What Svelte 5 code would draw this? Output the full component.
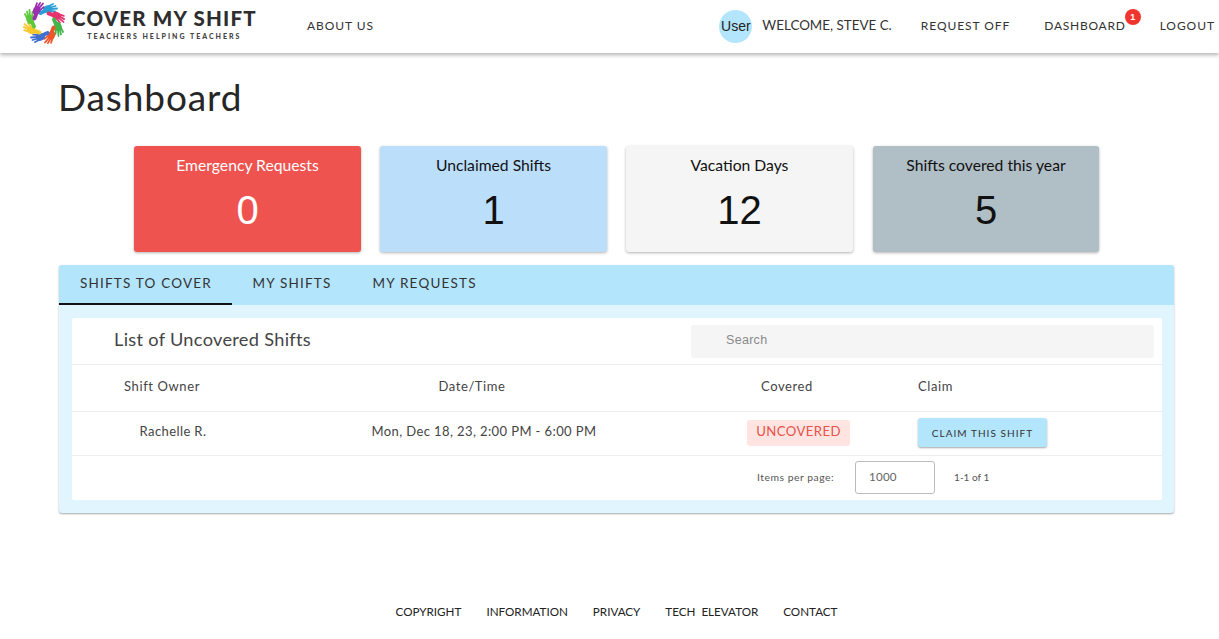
<script lang="ts">
  const stats = [
    { label: "Emergency Requests", value: 0, tone: "red" },
    { label: "Unclaimed Shifts", value: 1, tone: "blue" },
    { label: "Vacation Days", value: 12, tone: "light" },
    { label: "Shifts covered this year", value: 5, tone: "slate" }
  ];
  const tabs = ["Shifts to cover", "My shifts", "My requests"];
  const footerLinks = ["Copyright", "Information", "Privacy", "Tech  Elevator", "Contact"];

  // hands of the logo, clockwise from the top
  const hands = ["#2a9fd6", "#e5336f", "#43b649", "#f0562b", "#3f6fd1", "#f6c92e", "#5cc93c", "#9b2fae"];
</script>

<header class="topbar">
  <div class="brand">
    <svg class="logo" width="44" height="44" viewBox="0 0 44 44">
      {#each hands as color, i}
        <g transform="rotate({i * 45} 22 22)" fill={color} stroke={color} stroke-linecap="round">
          <path d="M18.5 12 L23 10" stroke-width="4" />
          <ellipse cx="25.5" cy="8" rx="4.5" ry="3.6" stroke="none" transform="rotate(-20 25.5 8)" />
          <path d="M26 5.5 L31 3" stroke-width="1.8" />
          <path d="M28 6.5 L33.5 5" stroke-width="1.8" />
          <path d="M28.5 8 L35 7.5" stroke-width="1.8" />
          <path d="M28 10 L33 10.5" stroke-width="1.8" />
        </g>
      {/each}
    </svg>
    <div class="brand-text">
      <span class="brand-name">COVER MY SHIFT</span>
      <span class="brand-tag">TEACHERS HELPING TEACHERS</span>
    </div>
  </div>
  <a class="nav-link about" href="#about">About us</a>
  <div class="spacer"></div>
  <span class="avatar">User</span>
  <span class="welcome">Welcome, Steve C.</span>
  <a class="nav-link" href="#off">Request off</a>
  <a class="nav-link dash" href="#dash">Dashboard<span class="badge">1</span></a>
  <a class="nav-link" href="#logout">Logout</a>
</header>

<main class="page">
  <h1>Dashboard</h1>

  <section class="stats">
    {#each stats as s}
      <div class="stat {s.tone}">
        <div class="stat-label">{s.label}</div>
        <div class="stat-value">{s.value}</div>
      </div>
    {/each}
  </section>

  <section class="tabs-card">
    <div class="tab-row">
      {#each tabs as tab, i}
        <div class="tab" class:active={i === 0}>{tab}</div>
      {/each}
    </div>
    <div class="tab-body">
      <div class="panel">
        <div class="panel-head">
          <div class="panel-title">List of Uncovered Shifts</div>
          <div class="search">Search</div>
        </div>
        <div class="row head">
          <div>Shift Owner</div>
          <div>Date/Time</div>
          <div>Covered</div>
          <div class="c-claim">Claim</div>
        </div>
        <div class="row body">
          <div class="lifted">Rachelle R.</div>
          <div class="lifted">Mon, Dec 18, 23, 2:00 PM - 6:00 PM</div>
          <div><span class="pill">UNCOVERED</span></div>
          <div class="c-claim"><button class="claim">Claim this shift</button></div>
        </div>
        <div class="pager">
          <span class="pager-label">Items per page:</span>
          <div class="pager-box">1000</div>
          <span class="pager-range">1-1 of 1</span>
        </div>
      </div>
    </div>
  </section>
</main>

<footer class="foot">
  {#each footerLinks as link}
    <a href="#foot">{link}</a>
  {/each}
</footer>

<style>
  :global(body) {
    margin: 0;
    background: #fff;
    font-family: "Lato", "Open Sans", sans-serif;
    color: #2b2b2b;
  }

  .topbar {
    height: 53px;
    display: flex;
    align-items: center;
    padding: 0 4px 0 22px;
    background: #fff;
    box-shadow: 0 2px 4px rgba(0, 0, 0, 0.3);
    box-sizing: border-box;
  }

  .brand {
    display: flex;
    align-items: center;
    gap: 6px;
    width: 285px;
    margin-bottom: 7px;
  }

  .brand-text {
    display: flex;
    flex-direction: column;
    align-items: center;
  }

  .brand-name {
    font-weight: 900;
    font-size: 20.5px;
    line-height: 24px;
    letter-spacing: 1.2px;
    color: #2e2e2e;
    white-space: nowrap;
  }

  .brand-tag {
    margin-top: 2px;
    font-size: 7px;
    font-weight: 900;
    letter-spacing: 2px;
    line-height: 9px;
    color: #444;
    white-space: nowrap;
  }

  .spacer {
    flex: 1;
  }

  .nav-link {
    position: relative;
    top: -1px;
    font-size: 12px;
    letter-spacing: 0.95px;
    text-transform: uppercase;
    color: #333;
    text-decoration: none;
    margin-left: 34px;
    white-space: nowrap;
  }

  .nav-link.about {
    margin-left: 0;
  }

  .nav-link.dash {
    letter-spacing: 0.75px;
  }

  .badge {
    position: absolute;
    top: -9px;
    right: -15px;
    width: 16px;
    height: 16px;
    border-radius: 50%;
    background: #f0352f;
    color: #fff;
    font: 700 9px/16px "Liberation Sans", sans-serif;
    letter-spacing: 0;
    text-align: center;
  }

  .avatar {
    width: 33px;
    height: 33px;
    border-radius: 50%;
    background: #b3e5fc;
    font: 14px/33px "Liberation Sans", sans-serif;
    text-align: center;
    color: #222;
  }

  .welcome {
    margin-left: 10px;
    margin-right: -5px;
    font-size: 13.4px;
    color: #333;
    text-transform: uppercase;
    position: relative;
    top: -2px;
    white-space: nowrap;
  }

  .page {
    padding: 0 45px 0 59px;
  }

  h1 {
    margin: 0 0 0 -1px;
    padding-top: 21px;
    font-size: 37px;
    line-height: 45px;
    font-weight: 400;
    letter-spacing: 0.9px;
    color: #262626;
  }

  .stats {
    display: flex;
    gap: 19px;
    margin: 27px 0 0 75px;
  }

  .stat {
    width: 227px;
    height: 106px;
    border-radius: 3px;
    box-sizing: border-box;
    padding-top: 9px;
    text-align: center;
    box-shadow: 0 1px 3px rgba(0, 0, 0, 0.3);
  }

  .stat-label {
    font-size: 15.7px;
    line-height: 20px;
  }

  .stat-value {
    font: 40px/46px "Liberation Sans", sans-serif;
    margin-top: 12px;
  }

  .red {
    background: #ef5350;
    color: #fff;
  }

  .blue {
    background: #bbdefb;
    color: #111;
  }

  .light {
    background: #f5f5f5;
    color: #111;
  }

  .slate {
    width: 226px;
    margin-left: 1px;
    background: #b0bec5;
    color: #111;
  }

  .tabs-card {
    margin-top: 13px;
    background: #e1f5fe;
    border-radius: 3px;
    box-shadow: 0 1px 2px rgba(0, 0, 0, 0.35);
    overflow: hidden;
  }

  .tab-row {
    display: flex;
    height: 40px;
    background: #b3e5fc;
  }

  .tab {
    padding: 0 20.5px;
    line-height: 37px;
    font-size: 13.5px;
    letter-spacing: 1.2px;
    text-transform: uppercase;
    color: #333;
    white-space: nowrap;
  }

  .tab.active {
    width: 173px;
    box-sizing: border-box;
    padding-left: 21px;
    border-bottom: 2px solid #111;
    height: 40px;
  }

  .tab-body {
    padding: 13px 12px 13px 13px;
  }

  .panel {
    background: #fff;
    border-radius: 2px;
  }

  .panel-head {
    display: flex;
    align-items: center;
    height: 46px;
    border-bottom: 1px solid #eee;
    padding: 0 8px 0 42px;
  }

  .panel-title {
    font-size: 18.2px;
    letter-spacing: 0.3px;
    color: #444;
    width: 577px;
    position: relative;
    top: -2px;
  }

  .search {
    flex: 1;
    height: 33px;
    background: #f5f5f5;
    border-radius: 3px;
    padding-left: 35px;
    font: 12.5px/31px "Liberation Sans", sans-serif;
    letter-spacing: 0.3px;
    color: #8a8a8a;
  }

  .row {
    display: grid;
    align-items: center;
    box-sizing: border-box;
    font-size: 13px;
    letter-spacing: 0.4px;
    color: #444;
    border-bottom: 1px solid #eee;
    text-align: center;
    white-space: nowrap;
  }

  .row.head {
    height: 47px;
    padding-bottom: 4px;
    grid-template-columns: 180px 440px 190px 1fr;
    letter-spacing: 0.6px;
  }

  .row.body {
    height: 44px;
    padding-bottom: 2px;
    grid-template-columns: 202px 420px 208px 1fr;
  }

  .lifted {
    padding-bottom: 3px;
  }

  .row.head .c-claim {
    padding-left: 36px;
  }

  .row.body .c-claim {
    padding-left: 16px;
  }

  .c-claim {
    text-align: left;
  }

  .pill {
    display: block;
    width: 103px;
    margin-left: 53px;
    background: #ffe4e1;
    color: #e5534b;
    font-size: 13.2px;
    line-height: 22px;
    height: 26px;
    border-radius: 3px;
  }

  .claim {
    display: block;
    width: 129px;
    height: 29px;
    padding: 0;
    font: 10px "Lato", sans-serif;
    letter-spacing: 1.05px;
    text-transform: uppercase;
    color: #333;
    background: #b3e5fc;
    border: none;
    border-radius: 3px;
    box-shadow: 0 1px 2px rgba(0, 0, 0, 0.35);
  }

  .pager {
    display: flex;
    align-items: center;
    box-sizing: border-box;
    height: 44px;
    padding: 0 0 2px 685px;
    font-size: 10.4px;
    letter-spacing: 0.5px;
    color: #555;
  }

  .pager-box {
    width: 80px;
    height: 33px;
    box-sizing: border-box;
    margin: 0 19px 0 21px;
    padding-left: 13px;
    border: 1px solid #bbb;
    border-radius: 3px;
    font-size: 11.6px;
    letter-spacing: 0.2px;
    line-height: 30px;
    color: #666;
  }

  .pager-range {
    font-size: 10px;
    letter-spacing: 0;
  }

  .foot {
    display: flex;
    justify-content: center;
    gap: 25px;
    margin-top: 92px;
    padding-left: 14px;
  }

  .foot a {
    font-size: 11.65px;
    text-transform: uppercase;
    color: #222;
    text-decoration: none;
    white-space: pre;
  }
</style>
